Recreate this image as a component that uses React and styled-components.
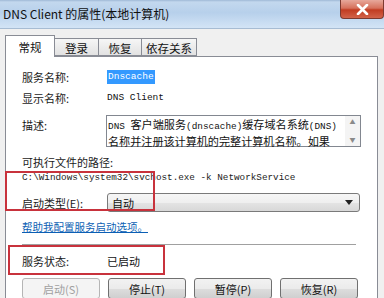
import React from "react";
import styled, { createGlobalStyle } from "styled-components";

const GlobalStyle = createGlobalStyle`
  html, body {
    margin: 0;
    padding: 0;
    background: #f0f0f0;
    overflow: hidden;
  }
  body {
    font-family: "Noto Sans CJK SC", "Liberation Sans", sans-serif;
  }
`;

const CJK = `"Noto Sans CJK SC", "Liberation Sans", sans-serif`;
const MONO = `"Liberation Mono", "Noto Sans CJK SC", monospace`;

export default function App() {
  return (
    <Window>
      <GlobalStyle />
      <TitleBar>
        <Title>DNS Client 的属性(本地计算机)</Title>
        <CloseButton>
          <svg width="13" height="11" viewBox="0 0 13 11">
            <path d="M2 1 L11 10 M11 1 L2 10" stroke="#fff" strokeWidth="2.6" strokeLinecap="round" />
          </svg>
        </CloseButton>
      </TitleBar>
      <Body>
        <Tabs>
          <Tab active w={50}>常规</Tab>
          <Tab w={45}>登录</Tab>
          <Tab w={44}>恢复</Tab>
          <Tab w={56}>依存关系</Tab>
        </Tabs>
        <Panel>
          <Row mt={12}>
            <Label>服务名称:</Label>
            <Selected>Dnscache</Selected>
          </Row>
          <Row mt={5}>
            <Label>显示名称:</Label>
            <Value>DNS Client</Value>
          </Row>
          <Row mt={9} top>
            <Label pt={2}>描述:</Label>
            <TextBox>
              <BoxText>
                <Latin>DNS </Latin>客户端服务<Latin>(dnscache)</Latin>缓存域名系统<Latin>(DNS)</Latin>
                <br />
                名称并注册该计算机的完整计算机名称。如果
              </BoxText>
              <ScrollBar>
                <Arrow>▲</Arrow>
                <Arrow>▼</Arrow>
              </ScrollBar>
            </TextBox>
          </Row>
          <Line mt={7}>可执行文件的路径:</Line>
          <PathText>C:\Windows\system32\svchost.exe -k NetworkService</PathText>
          <Row mt={7}>
            <Label>启动类型(E):</Label>
            <Select>
              <span>自动</span>
              <svg width="8" height="5" viewBox="0 0 8 5">
                <path d="M0 0 H8 L4 5 Z" fill="#222" />
              </svg>
            </Select>
          </Row>
          <HelpLink mt={7}>帮助我配置服务启动选项。</HelpLink>
          <Separator />
          <Row mt={8}>
            <Label>服务状态:</Label>
            <StatusValue>已启动</StatusValue>
          </Row>
          <Buttons>
            <Button disabled>启动(S)</Button>
            <Button>停止(T)</Button>
            <Button>暂停(P)</Button>
            <Button>恢复(R)</Button>
          </Buttons>
        </Panel>
      </Body>
      <Mark style={{ left: 5, top: 171, width: 150, height: 40 }} />
      <Mark style={{ left: 8, top: 245, width: 157, height: 30 }} />
    </Window>
  );
}

const Window = styled.div`
  position: relative;
  width: 384px;
  height: 298px;
  overflow: hidden;
  background: #f0f0f0;
`;

const TitleBar = styled.div`
  height: 28px;
  display: flex;
  justify-content: space-between;
  align-items: flex-start;
  background: linear-gradient(to bottom, #9fb9d6 0, #c3d8ee 2px, #b7d0eb 45%, #c9ddf2 80%, #d3e4f5 100%);
  border-bottom: 1px solid #a7bcd3;
`;

const Title = styled.div`
  padding: 6px 0 0 3px;
  font-family: ${CJK};
  font-size: 12px;
  line-height: 16px;
  color: #101010;
`;

const CloseButton = styled.div`
  width: 42px;
  height: 18px;
  display: flex;
  align-items: center;
  justify-content: center;
  background: linear-gradient(to bottom, #e7a89b 0, #d6715c 45%, #c13c22 55%, #d2634a 100%);
  border: 1px solid #7d3a30;
  border-top: none;
  border-radius: 0 0 4px 4px;
`;

const Body = styled.div`
  padding: 6px 6px 0 5px;
`;

const Tabs = styled.div`
  display: flex;
  align-items: flex-end;
  height: 21px;
  position: relative;
  z-index: 1;
`;

const Tab = styled.div`
  width: ${(p) => p.w}px;
  height: ${(p) => (p.active ? 22 : 18)}px;
  box-sizing: border-box;
  display: flex;
  align-items: center;
  justify-content: center;
  font-family: ${CJK};
  font-size: 11.5px;
  color: #111;
  border: 1px solid #898c95;
  border-bottom: ${(p) => (p.active ? "none" : "1px solid #898c95")};
  margin-right: -1px;
  padding-top: ${(p) => (p.active ? 0 : 1)}px;
  background: ${(p) => (p.active ? "#fff" : "linear-gradient(to bottom, #f6f6f6, #e2e2e2)")};
  margin-bottom: ${(p) => (p.active ? -1 : 0)}px;
`;

const Panel = styled.div`
  width: 373px;
  height: 260px;
  box-sizing: border-box;
  background: #fff;
  border: 1px solid #898c95;
  padding: 0 16px;
  display: flex;
  flex-direction: column;
`;

const Row = styled.div`
  display: flex;
  align-items: ${(p) => (p.top ? "flex-start" : "center")};
  margin-top: ${(p) => p.mt || 0}px;
`;

const Label = styled.div`
  width: 85px;
  flex: none;
  font-family: ${CJK};
  font-size: 11px;
  line-height: 16px;
  color: #1a1a1a;
  padding-top: ${(p) => p.pt || 0}px;
`;

const Value = styled.div`
  font-family: ${MONO};
  font-size: 9.5px;
  line-height: 16px;
  color: #111;
`;

const Selected = styled(Value)`
  background: #3399ff;
  color: #fff;
  padding: 0 1px;
  line-height: 14px;
`;

const StatusValue = styled.div`
  font-family: ${CJK};
  font-size: 11px;
  line-height: 16px;
  color: #111;
`;

const TextBox = styled.div`
  margin-left: -1px;
  width: 255px;
  height: 32px;
  box-sizing: border-box;
  border: 1px solid #828790;
  display: flex;
  background: #fff;
`;

const BoxText = styled.div`
  flex: 1;
  padding: 1px 0 0 1px;
  font-family: ${CJK};
  font-size: 11.1px;
  line-height: 14px;
  color: #111;
  white-space: nowrap;
`;

const Latin = styled.span`
  font-family: ${MONO};
  font-size: 9.4px;
`;

const ScrollBar = styled.div`
  width: 15px;
  display: flex;
  flex-direction: column;
  justify-content: space-between;
  align-items: center;
  background: #f4f4f4;
`;

const Arrow = styled.span`
  font-size: 6px;
  line-height: 12px;
  color: #8a8a8a;
`;

const Line = styled.div`
  margin-top: ${(p) => p.mt || 0}px;
  font-family: ${CJK};
  font-size: 11px;
  line-height: 16px;
  color: #1a1a1a;
`;

const PathText = styled.div`
  font-family: ${MONO};
  font-size: 9.3px;
  line-height: 16px;
  color: #222;
  white-space: nowrap;
`;

const Select = styled.div`
  width: 253px;
  height: 19px;
  box-sizing: border-box;
  border: 1px solid #7a7a7a;
  border-radius: 3px;
  background: linear-gradient(to bottom, #f6f6f6 0, #efefef 50%, #e4e4e4 51%, #d8d8d8 100%);
  display: flex;
  align-items: center;
  justify-content: space-between;
  padding: 0 6px 0 4px;
  font-family: ${CJK};
  font-size: 11px;
  color: #111;
`;

const HelpLink = styled.a`
  margin-top: ${(p) => p.mt || 0}px;
  font-family: ${CJK};
  font-size: 10.5px;
  line-height: 16px;
  color: #0c5fb4;
  text-decoration: underline;
  align-self: flex-start;
`;

const Separator = styled.div`
  margin-top: 9px;
  height: 1px;
  width: 334px;
  background: #a0a0a0;
`;

const Buttons = styled.div`
  margin-top: 9px;
  display: flex;
  gap: 8px;
`;

const Button = styled.div`
  width: 78px;
  height: 21px;
  box-sizing: border-box;
  display: flex;
  align-items: center;
  justify-content: center;
  border: 1px solid ${(p) => (p.disabled ? "#b5b5b5" : "#707070")};
  border-radius: 3px;
  background: ${(p) =>
    p.disabled ? "#f4f4f4" : "linear-gradient(to bottom, #f2f2f2 0, #ebebeb 50%, #dddddd 51%, #cfcfcf 100%)"};
  font-family: ${CJK};
  font-size: 11px;
  color: ${(p) => (p.disabled ? "#a0a0a0" : "#111")};
`;

const Mark = styled.div`
  position: absolute;
  box-sizing: border-box;
  border: 2.5px solid #c8323c;
  pointer-events: none;
`;
